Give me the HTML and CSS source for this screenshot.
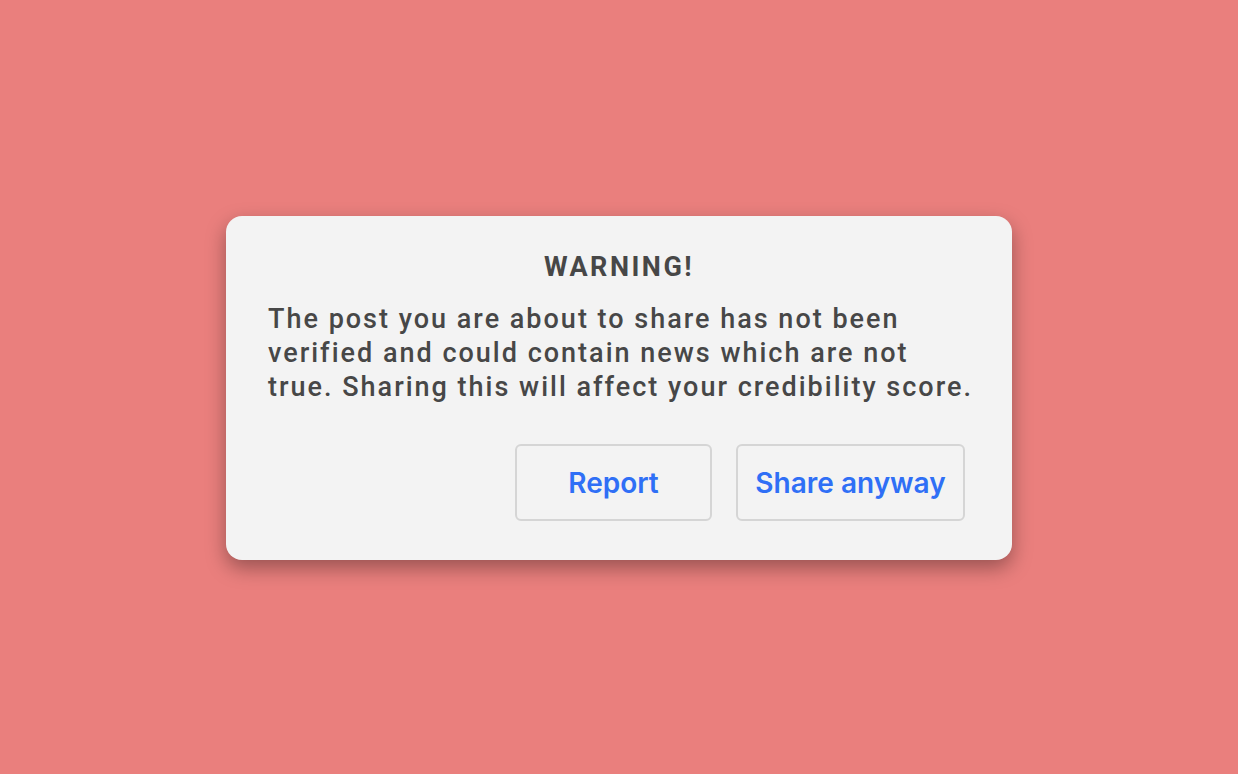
FILE: index.html
```html
<!DOCTYPE html>
<html lang="en">
<head>
  <meta charset="UTF-8" />
  <meta name="viewport" content="width=device-width, initial-scale=1.0" />
  <title>Warning</title>
  <link rel="stylesheet" href="styles.css">
</head>
<body>
  <div class="dialog">
    <h1 class="title">WARNING!</h1>
    <p class="message">
      The post you are about to share has not been<br/>
      verified and could contain news which are not<br/>
      true. Sharing this will affect your credibility score.
    </p>
    <div class="actions">
      <button class="report">Report</button>
      <button class="share">Share anyway</button>
    </div>
  </div>
</body>
</html>
```

FILE: styles.css
```css
body {
  font-family: Roboto, "Noto Sans", sans-serif;
  background: #ea7f7d;
  color: #474747;
  margin: 0;
  height: 100vh;
  display: flex;
  align-items: center;
  justify-content: center;
}

.dialog {
  width: 786px;
  box-sizing: border-box;
  margin-top: 2px;
  padding: 35px 20px 39px 42px;
  background: #f3f3f3;
  border-radius: 16px;
  box-shadow: 0 8px 20px rgba(0, 0, 0, 0.35);
}

.title {
  margin: 0 22px 0 0;
  text-align: center;
  font-size: 27px;
  font-weight: 700;
  letter-spacing: 2.5px;
  line-height: 32px;
}

.message {
  margin: 19px 0 0;
  font-size: 27px;
  font-weight: 500;
  letter-spacing: 2px;
  line-height: 34px;
  white-space: nowrap;
}

.actions {
  margin-top: 40px;
  margin-right: 27px;
  display: flex;
  justify-content: flex-end;
  gap: 24px;
}

button {
  font-family: Inter, "Liberation Sans", sans-serif;
  font-size: 28px;
  font-weight: 600;
  color: #2f6ff6;
  background: transparent;
  border: 2px solid #d5d5d5;
  border-radius: 6px;
  height: 77px;
  padding: 0 10px;
  cursor: pointer;
}
.report {
  width: 197px;
}
.share {
  width: 229px;
}
```
